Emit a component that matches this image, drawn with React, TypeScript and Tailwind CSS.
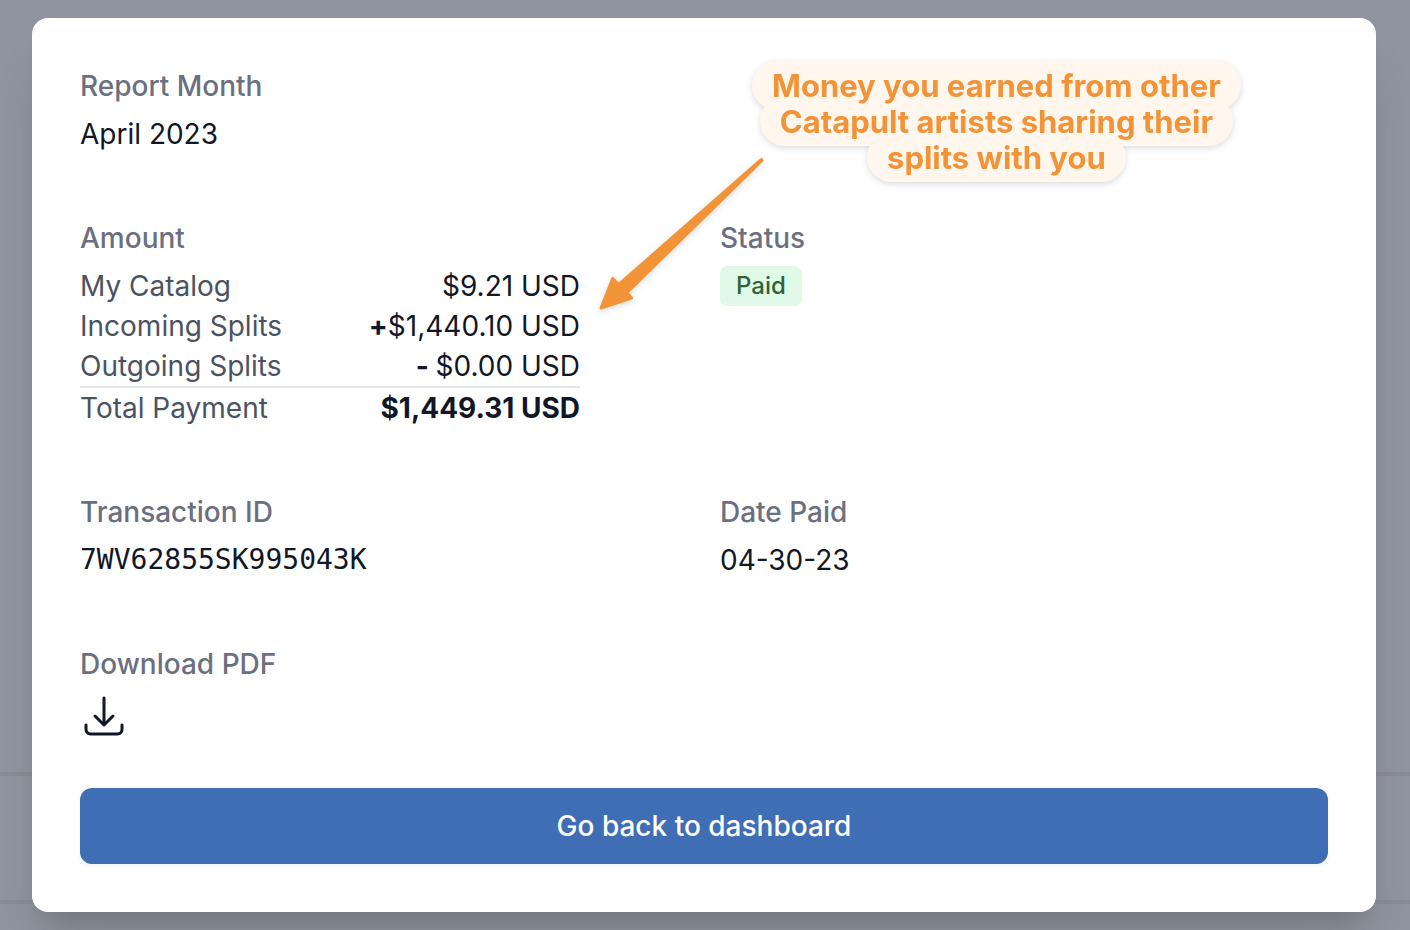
import type { ReactNode } from "react";

type Amount = { label: string; sign?: string; value: string };

const amounts: Amount[] = [
  { label: "My Catalog", value: "$9.21 USD" },
  { label: "Incoming Splits", sign: "+", value: "$1,440.10 USD" },
  { label: "Outgoing Splits", sign: "- ", value: "$0.00 USD" },
];

function Field({ label, className = "", children }: { label: string; className?: string; children: ReactNode }) {
  return (
    <div className={className}>
      <dt className="font-medium text-[#6b7080]">{label}</dt>
      <dd className="mt-2">{children}</dd>
    </div>
  );
}

function AmountTable() {
  return (
    <table className="w-full max-w-[500px] border-collapse">
      <tbody>
        {amounts.map((row) => (
          <tr key={row.label}>
            <th scope="row" className="p-0 text-left font-normal text-[#4b5361]">
              {row.label}
            </th>
            <td className="p-0 text-right">
              {row.sign && <span className="whitespace-pre font-bold">{row.sign}</span>}
              {row.value}
            </td>
          </tr>
        ))}
      </tbody>
      <tfoot>
        <tr className="border-t-2 border-[#e4e5ea]">
          <th scope="row" className="p-0 text-left font-normal text-[#4b5361]">
            Total Payment
          </th>
          <td className="p-0 text-right font-bold">$1,449.31 USD</td>
        </tr>
      </tfoot>
    </table>
  );
}

function DownloadIcon() {
  return (
    <svg className="size-12" viewBox="0 0 24 24" fill="none" stroke="currentColor" strokeWidth={1.5} strokeLinecap="round" strokeLinejoin="round" aria-hidden="true">
      <path d="M3 16.5v2.25A2.25 2.25 0 0 0 5.25 21h13.5A2.25 2.25 0 0 0 21 18.75V16.5M16.5 12 12 16.5m0 0L7.5 12m4.5 4.5V3" />
    </svg>
  );
}

function Callout() {
  return (
    <>
      <p className="absolute top-[50px] left-[720px] text-center text-[31px] leading-9 font-bold whitespace-nowrap text-[#f29337] drop-shadow-[0_2px_3px_rgba(0,0,0,0.14)]">
        <span className="rounded-[25px] bg-[#fff6ee] box-decoration-clone px-5 py-[6px]">
          <span className="relative">
            Money you earned from other
            <br />
            Catapult artists sharing their
            <br />
            splits with you
          </span>
        </span>
      </p>
      <svg className="absolute top-[134px] left-[560px] h-[166px] w-[180px] drop-shadow-[0_2px_3px_rgba(0,0,0,0.14)]" viewBox="0 0 180 166" fill="#f29337" stroke="#f29337" strokeWidth={3} strokeLinejoin="round" aria-hidden="true">
        <path d="M169.4 7.4 170 8.4 35 140.5 39.5 146 9 156 20.8 126.4 26.6 132.6Z" />
      </svg>
    </>
  );
}

export default function App() {
  return (
    <div className="relative isolate min-h-screen bg-[#9094a0] py-[18px] pr-[34px] pl-8 font-['Inter',sans-serif] text-[28px] leading-10 text-[#111726]">
      {/* dimmed page rows behind the dialog */}
      <div className="absolute inset-0 -z-10 flex flex-col overflow-hidden" aria-hidden="true">
        <div className="h-[776px] shrink-0 border-b-4 border-[#898c97]" />
        <div className="h-32 shrink-0 border-b-4 border-[#898c97]" />
      </div>

      <div role="dialog" aria-label="Payment details" className="relative rounded-2xl bg-white p-12 shadow-[0_40px_50px_-10px_rgba(0,0,0,0.12),0_16px_20px_-12px_rgba(0,0,0,0.12)]">
        <dl className="grid grid-cols-2 gap-x-8 gap-y-16">
          <Field label="Report Month" className="col-span-2">
            April 2023
          </Field>
          <Field label="Amount">
            <AmountTable />
          </Field>
          <Field label="Status">
            <span className="flex h-10 w-fit items-center rounded-lg bg-[#e0fae7] px-4 text-2xl font-medium text-[#2f643a]">
              Paid
            </span>
          </Field>
          <Field label="Transaction ID">
            <span className="block font-['DejaVu_Sans_Mono',monospace]">7WV62855SK995043K</span>
          </Field>
          <Field label="Date Paid">04-30-23</Field>
          <Field label="Download PDF" className="col-span-2">
            <button type="button" aria-label="Download PDF" className="block">
              <DownloadIcon />
            </button>
          </Field>
        </dl>

        <button type="button" className="mt-12 block h-[76px] w-full rounded-xl bg-[#406eb4] font-medium text-white shadow-[0_2px_4px_rgba(0,0,0,0.05)]">
          Go back to dashboard
        </button>

        <Callout />
      </div>
    </div>
  );
}
